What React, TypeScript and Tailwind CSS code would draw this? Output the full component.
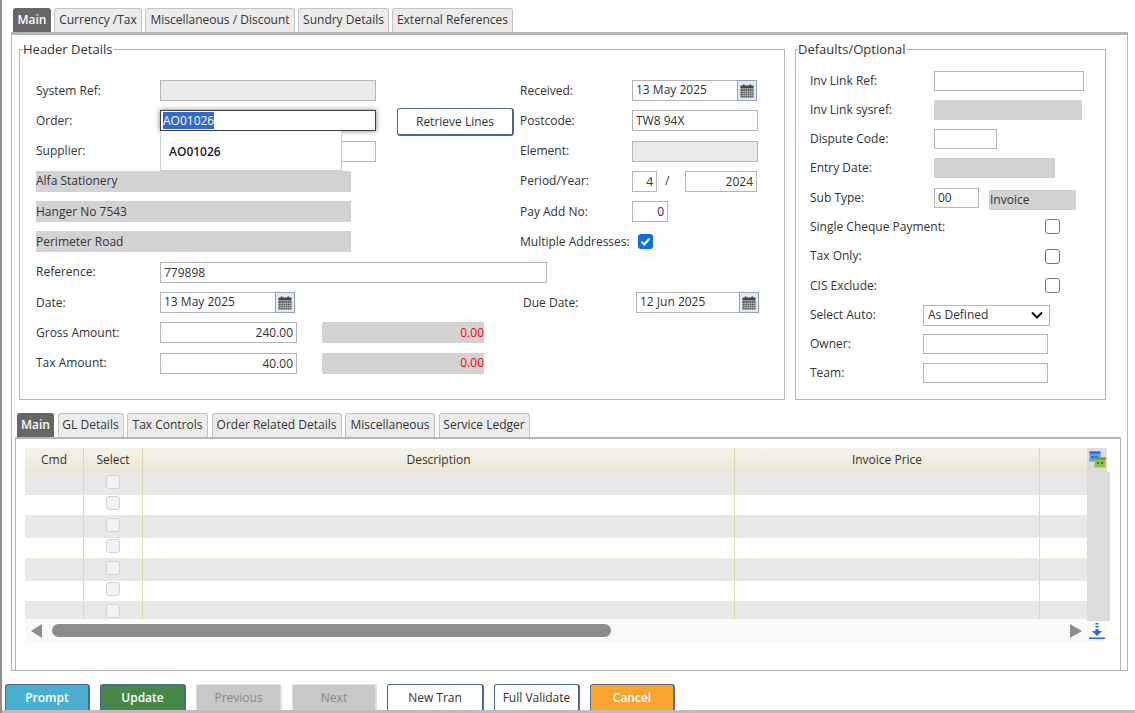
import React from "react";

const Tab = ({ label, active, w }: { label: string; active?: boolean; w: string }) => (
  <div className={`${w} h-full pb-[1px] flex items-center justify-center rounded-t-[3px] border border-b-0 whitespace-nowrap ${active ? "bg-[#666666] border-[#666666] text-white font-semibold" : "bg-[#ececec] border-[#c4c4c4] text-[#333333]"}`}>
    {label}
  </div>
);

const Label = ({ children, w = "w-[124px]" }: { children: React.ReactNode; w?: string }) => (
  <div className={`${w} shrink-0 whitespace-nowrap`}>{children}</div>
);

const Box = ({ w, value, right, disabled }: { w: string; value?: string; right?: boolean; disabled?: boolean }) => (
  <input
    readOnly
    value={value ?? ""}
    className={`${w} h-full shrink-0 border border-[#b5b5b5] outline-none text-[#333333] ${right ? "text-right pr-[3px]" : "pl-[3px]"} ${disabled ? "bg-[#ebebeb]" : "bg-white"}`}
  />
);

const Grey = ({ w, children, right, red }: { w: string; children?: React.ReactNode; right?: boolean; red?: boolean }) => (
  <div className={`${w} h-full shrink-0 bg-[#d3d3d3] flex items-center whitespace-nowrap ${right ? "justify-end" : ""} ${red ? "text-[#ff0000]" : ""}`}>{children}</div>
);

const CalIcon = () => (
  <svg width="14" height="14" viewBox="0 0 14 14">
    <rect x="3" y="0.5" width="1.6" height="2.5" fill="#444" />
    <rect x="9.4" y="0.5" width="1.6" height="2.5" fill="#444" />
    <rect x="0.5" y="1.5" width="13" height="3" fill="#444" />
    <rect x="0.5" y="5" width="13" height="8.5" fill="#555" />
    <path d="M0.5 7.5H13.5M0.5 9.5H13.5M0.5 11.5H13.5M3 5V13.5M5.2 5V13.5M7.4 5V13.5M9.6 5V13.5M11.8 5V13.5" stroke="#c9c9c9" strokeWidth="0.6" />
  </svg>
);

const DateBox = ({ w, value }: { w: string; value: string }) => (
  <div className={`${w} h-full shrink-0 flex border border-[#b5b5b5] bg-white`}>
    <div className="flex-1 pl-[3px] pb-[1px] flex items-center">{value}</div>
    <div className="w-[20px] -my-px -mr-px border border-[#8ea3c4] bg-[#e6e9ee] flex items-center justify-center">
      <CalIcon />
    </div>
  </div>
);

const Check = () => <div className="w-[15px] h-[15px] rounded-[3px] border border-[#767676] bg-white" />;

const Btn = ({ label, w, kind }: { label: string; w: string; kind: "prompt" | "update" | "off" | "plain" | "cancel" }) => {
  const cls = {
    prompt: "bg-[#4bafcf] text-white font-semibold border-[#4d6a8c]",
    update: "bg-[#47884a] text-white font-semibold border-[#4d6a8c]",
    off: "bg-[#c8c8c8] text-[#8a8a8a] border-[#dcdcec]",
    plain: "bg-white text-[#333333] border-[#4d6a8c]",
    cancel: "bg-[#faa530] text-white font-semibold border-[#5f6f80]",
  }[kind];
  return <div className={`${w} h-[30px] shrink-0 rounded-[3px] border border-r-2 pb-[2px] flex items-center justify-center ${cls}`}>{label}</div>;
};

const Row = ({ children }: { children: React.ReactNode }) => <div className="h-[21px] flex items-center">{children}</div>;

const rows = [0, 1, 2, 3, 4, 5, 6];

export default function App() {
  return (
    <div className="relative w-[1135px] h-[713px] overflow-hidden bg-white border-l-2 border-[#8f8f8f] text-[12px] leading-[16px] text-[#333333] font-['Open_Sans',sans-serif]">
      <div className="h-[24px] relative top-[8px] pl-[11px] flex gap-[3px]">
        <Tab label="Main" active w="w-[38px]" />
        <Tab label="Currency /Tax" w="w-[88px]" />
        <Tab label="Miscellaneous / Discount" w="w-[150px]" />
        <Tab label="Sundry Details" w="w-[91px]" />
        <Tab label="External References" w="w-[121px]" />
      </div>

      {/* outer panel */}
      <div className="ml-[9px] mt-[8px] w-[1117px] h-[639px] border border-[#b5b5b5] border-t-[3px] flex flex-col">
        <div className="h-[369px] pl-[7px] flex gap-[10px] shrink-0">
          {/* Header details */}
          <fieldset className="relative w-[766px] h-[360px] mt-[5px] border border-[#b5b5b5] pl-[16px] pt-[22px]">
            <legend className="-ml-[13px] text-[13px] leading-[18px] pr-[1px]">Header Details</legend>
            <div className="flex flex-col gap-[9.3px]">
              <div className="flex">
                <div className="w-[484px] flex flex-col gap-[9.3px] shrink-0">
                  <Row><Label>System Ref:</Label><Box w="w-[216px]" disabled /></Row>
                  <Row>
                    <Label>Order:</Label>
                    <div className="relative w-[216px] h-full shrink-0 border border-[#3d3d3d] shadow-[0_0_5px_rgba(0,0,0,0.5)] bg-white pl-[2px] flex items-center">
                      <span className="bg-[#3367d1] text-white leading-[17px]">AO01026</span>
                      <div className="absolute z-10 -left-px top-[20px] w-[182px] h-[40px] bg-white border border-t-0 border-[#d0d0d0] flex items-center pl-[8px] pt-[2px] font-semibold text-[#222222]">AO01026</div>
                    </div>
                    <div className="ml-[21px] mt-[3px] w-[117px] h-[28px] shrink-0 rounded-[3px] bg-white border border-[#4d6a8c] border-b-2 border-r-2 flex items-center justify-center">Retrieve Lines</div>
                  </Row>
                  <Row><Label>Supplier:</Label><Box w="w-[216px]" /></Row>
                  <Row><Grey w="w-[315px]">Alfa Stationery</Grey></Row>
                  <Row><Grey w="w-[315px]">Hanger No 7543</Grey></Row>
                  <Row><Grey w="w-[315px]">Perimeter Road</Grey></Row>
                </div>
                <div className="flex-1 flex flex-col gap-[9.3px]">
                  <Row><Label w="w-[112px]">Received:</Label><DateBox w="w-[125px]" value="13 May 2025" /></Row>
                  <Row><Label w="w-[112px]">Postcode:</Label><Box w="w-[126px]" value="TW8 94X" /></Row>
                  <Row><Label w="w-[112px]">Element:</Label><Box w="w-[126px]" disabled /></Row>
                  <Row>
                    <Label w="w-[112px]">Period/Year:</Label>
                    <Box w="w-[25px]" value="4" right />
                    <div className="w-[28px] pl-[8px]">/</div>
                    <Box w="w-[72px]" value="2024" right />
                  </Row>
                  <Row><Label w="w-[112px]">Pay Add No:</Label><Box w="w-[36px]" value="0" right /></Row>
                  <Row>
                    <Label w="w-[118px]">Multiple Addresses:</Label>
                    <div className="w-[15px] h-[15px] rounded-[3px] bg-[#0b6fe8] flex items-center justify-center">
                      <svg width="11" height="11" viewBox="0 0 11 11"><path d="M1.5 5.8L4.3 8.5L9.5 2.5" fill="none" stroke="#fff" strokeWidth="2" /></svg>
                    </div>
                  </Row>
                </div>
              </div>
              <Row><Label>Reference:</Label><Box w="w-[387px]" value="779898" /></Row>
              <Row>
                <Label>Date:</Label>
                <DateBox w="w-[135px]" value="13 May 2025" />
                <div className="w-[228px] shrink-0" />
                <Label w="w-[113px]">Due Date:</Label>
                <DateBox w="w-[123px]" value="12 Jun 2025" />
              </Row>
              <Row>
                <Label>Gross Amount:</Label>
                <Box w="w-[137px]" value="240.00" right />
                <div className="w-[25px] shrink-0" />
                <Grey w="w-[162px]" right red>0.00</Grey>
              </Row>
              <Row>
                <Label>Tax Amount:</Label>
                <Box w="w-[137px]" value="40.00" right />
                <div className="w-[25px] shrink-0" />
                <Grey w="w-[162px]" right red>0.00</Grey>
              </Row>
            </div>
          </fieldset>

          {/* Defaults */}
          <fieldset className="w-[311px] h-[360px] mt-[5px] border border-[#b5b5b5] pl-[14px] pt-[12.5px]">
            <legend className="-ml-[12px] text-[13px] leading-[18px] pr-[1px]">Defaults/Optional</legend>
            <div className="flex flex-col gap-[9.3px]">
              <div className="h-[20px] flex items-center"><Label>Inv Link Ref:</Label><Box w="w-[150px]" /></div>
              <div className="h-[20px] flex items-center"><Label>Inv Link sysref:</Label><Grey w="w-[148px]" /></div>
              <div className="h-[20px] flex items-center"><Label>Dispute Code:</Label><Box w="w-[63px]" /></div>
              <div className="h-[20px] flex items-center"><Label>Entry Date:</Label><Grey w="w-[121px]" /></div>
              <div className="h-[20px] flex items-center">
                <Label>Sub Type:</Label>
                <Box w="w-[45px]" value="00" />
                <div className="ml-[10px] w-[87px] h-[20px] mt-[4px] bg-[#d3d3d3] flex items-center pt-[1px] pl-[1px]">Invoice</div>
              </div>
              <div className="h-[20px] flex items-center"><Label w="w-[235px]">Single Cheque Payment:</Label><Check /></div>
              <div className="h-[20px] flex items-center"><Label w="w-[235px]">Tax Only:</Label><Check /></div>
              <div className="h-[20px] flex items-center"><Label w="w-[235px]">CIS Exclude:</Label><Check /></div>
              <div className="h-[20px] flex items-center">
                <Label w="w-[113px]">Select Auto:</Label>
                <div className="w-[127px] h-[21px] mt-[1px] border border-[#b5b5b5] flex items-center justify-between pl-[4px] pr-[6px]">
                  As Defined
                  <svg width="12" height="8" viewBox="0 0 12 8"><path d="M1 1.5L6 6.5L11 1.5" fill="none" stroke="#111" strokeWidth="2" /></svg>
                </div>
              </div>
              <div className="h-[20px] flex items-center"><Label w="w-[113px]">Owner:</Label><Box w="w-[125px]" /></div>
              <div className="h-[20px] flex items-center"><Label w="w-[113px]">Team:</Label><Box w="w-[125px]" /></div>
            </div>
          </fieldset>
        </div>

        {/* inner tabs */}
        <div className="h-[9px] shrink-0" />
        <div className="h-[24px] shrink-0 pl-[5px] flex gap-[3.5px]">
          <Tab label="Main" active w="w-[37px]" />
          <Tab label="GL Details" w="w-[66px]" />
          <Tab label="Tax Controls" w="w-[81px]" />
          <Tab label="Order Related Details" w="w-[130px]" />
          <Tab label="Miscellaneous" w="w-[90px]" />
          <Tab label="Service Ledger" w="w-[91px]" />
        </div>
        <div className="ml-[3px] w-[1106px] flex-1 border border-[#b5b5b5] border-t-2 border-b-0 pl-[9px] pt-[9px]">
          <div className="flex items-start">
            <div className="w-[1062px] shrink-0">
              <div className="grid grid-cols-[59px_59px_592px_305px_47px] h-[25px] pb-0 bg-gradient-to-b from-[#f5f2ea] to-[#ebe7d8]">
                <div className="border-r border-[#dfd6ba] pb-[2px] flex items-center justify-center">Cmd</div>
                <div className="border-r border-[#dfd6ba] pb-[2px] flex items-center justify-center">Select</div>
                <div className="border-r border-[#dfd6ba] pb-[2px] flex items-center justify-center">Description</div>
                <div className="border-r border-[#dfd6ba] pb-[2px] flex items-center justify-center">Invoice Price</div>
                <div />
              </div>
              <div className="h-[146px] overflow-hidden">
                {rows.map((i) => (
                  <div key={i} className={`grid grid-cols-[59px_59px_592px_305px_47px] h-[21.5px] border-b border-[#ede9d6] ${i % 2 === 0 ? "bg-[#e9e9e9]" : "bg-white"}`}>
                    <div className="border-r border-[#dfd6ba]" />
                    <div className="border-r border-[#dfd6ba] flex justify-center pt-[1.5px]">
                      <div className="w-[14px] h-[14px] rounded-[3px] border border-[#d4d4d4] bg-[#f3f3f3]" />
                    </div>
                    <div className="border-r border-[#dfd6ba]" />
                    <div className="border-r border-[#dfd6ba]" />
                    <div />
                  </div>
                ))}
              </div>
              <div className="h-[23px] bg-[#fafafa] flex items-center pl-[6px] pr-[5px]">
                <svg width="11" height="14" viewBox="0 0 11 14"><path d="M11 0V14L0 7Z" fill="#8c8c8c" /></svg>
                <div className="ml-[10px] w-[559px] h-[13px] rounded-full bg-[#8c8c8c]" />
                <div className="flex-1" />
                <svg width="12" height="14" viewBox="0 0 12 14"><path d="M0 0V14L12 7Z" fill="#8c8c8c" /></svg>
              </div>
            </div>
            <div className="flex flex-col">
              <div className="w-[20px] h-[24px] bg-[#dcdcdc] flex justify-center pt-[3px]">
                <svg width="17" height="17" viewBox="0 0 17 17">
                  <rect x="0.5" y="0.5" width="11" height="10" fill="#5b9bf5" />
                  <rect x="0.5" y="0.5" width="11" height="2" fill="#2a5fc9" />
                  <rect x="2.5" y="5" width="2" height="2" fill="#1d4fb5" />
                  <rect x="6" y="5" width="2" height="2" fill="#1d4fb5" />
                  <rect x="5.5" y="6.5" width="11" height="10" fill="#8bc34a" />
                  <rect x="5.5" y="6.5" width="11" height="2" fill="#5e9c2a" />
                  <rect x="8" y="11" width="2" height="2" fill="#3f7d1c" />
                  <rect x="12" y="11" width="2" height="2" fill="#3f7d1c" />
                </svg>
              </div>
              <div className="w-[23px] h-[149px] bg-[#dcdcdc]" />
              <div className="w-[20px] h-[21px] bg-[#fafafa] flex justify-center pt-[1px]">
                <svg width="16" height="18" viewBox="0 0 16 18">
                  <path d="M6.5 1H9.5V2.5H6.5ZM6.5 4H9.5V5.5H6.5ZM6.5 7H9.5V9H13L8 14L3 9H6.5Z" fill="#1f6fd0" />
                  <rect x="0" y="15.5" width="16" height="1.5" fill="#1f6fd0" />
                </svg>
              </div>
            </div>
          </div>
        </div>
      </div>

      {/* footer */}
      <div className="mt-[13px] pl-[3px] h-[26px] overflow-hidden flex gap-[10px]">
        <Btn label="Prompt" w="w-[85px]" kind="prompt" />
        <Btn label="Update" w="w-[86px]" kind="update" />
        <Btn label="Previous" w="w-[86px]" kind="off" />
        <Btn label="Next" w="w-[85px]" kind="off" />
        <Btn label="New Tran" w="w-[97px]" kind="plain" />
        <Btn label="Full Validate" w="w-[86px]" kind="plain" />
        <Btn label="Cancel" w="w-[85px]" kind="cancel" />
      </div>
      <div className="h-[3px] bg-[#bdbdbd]" />
    </div>
  );
}
